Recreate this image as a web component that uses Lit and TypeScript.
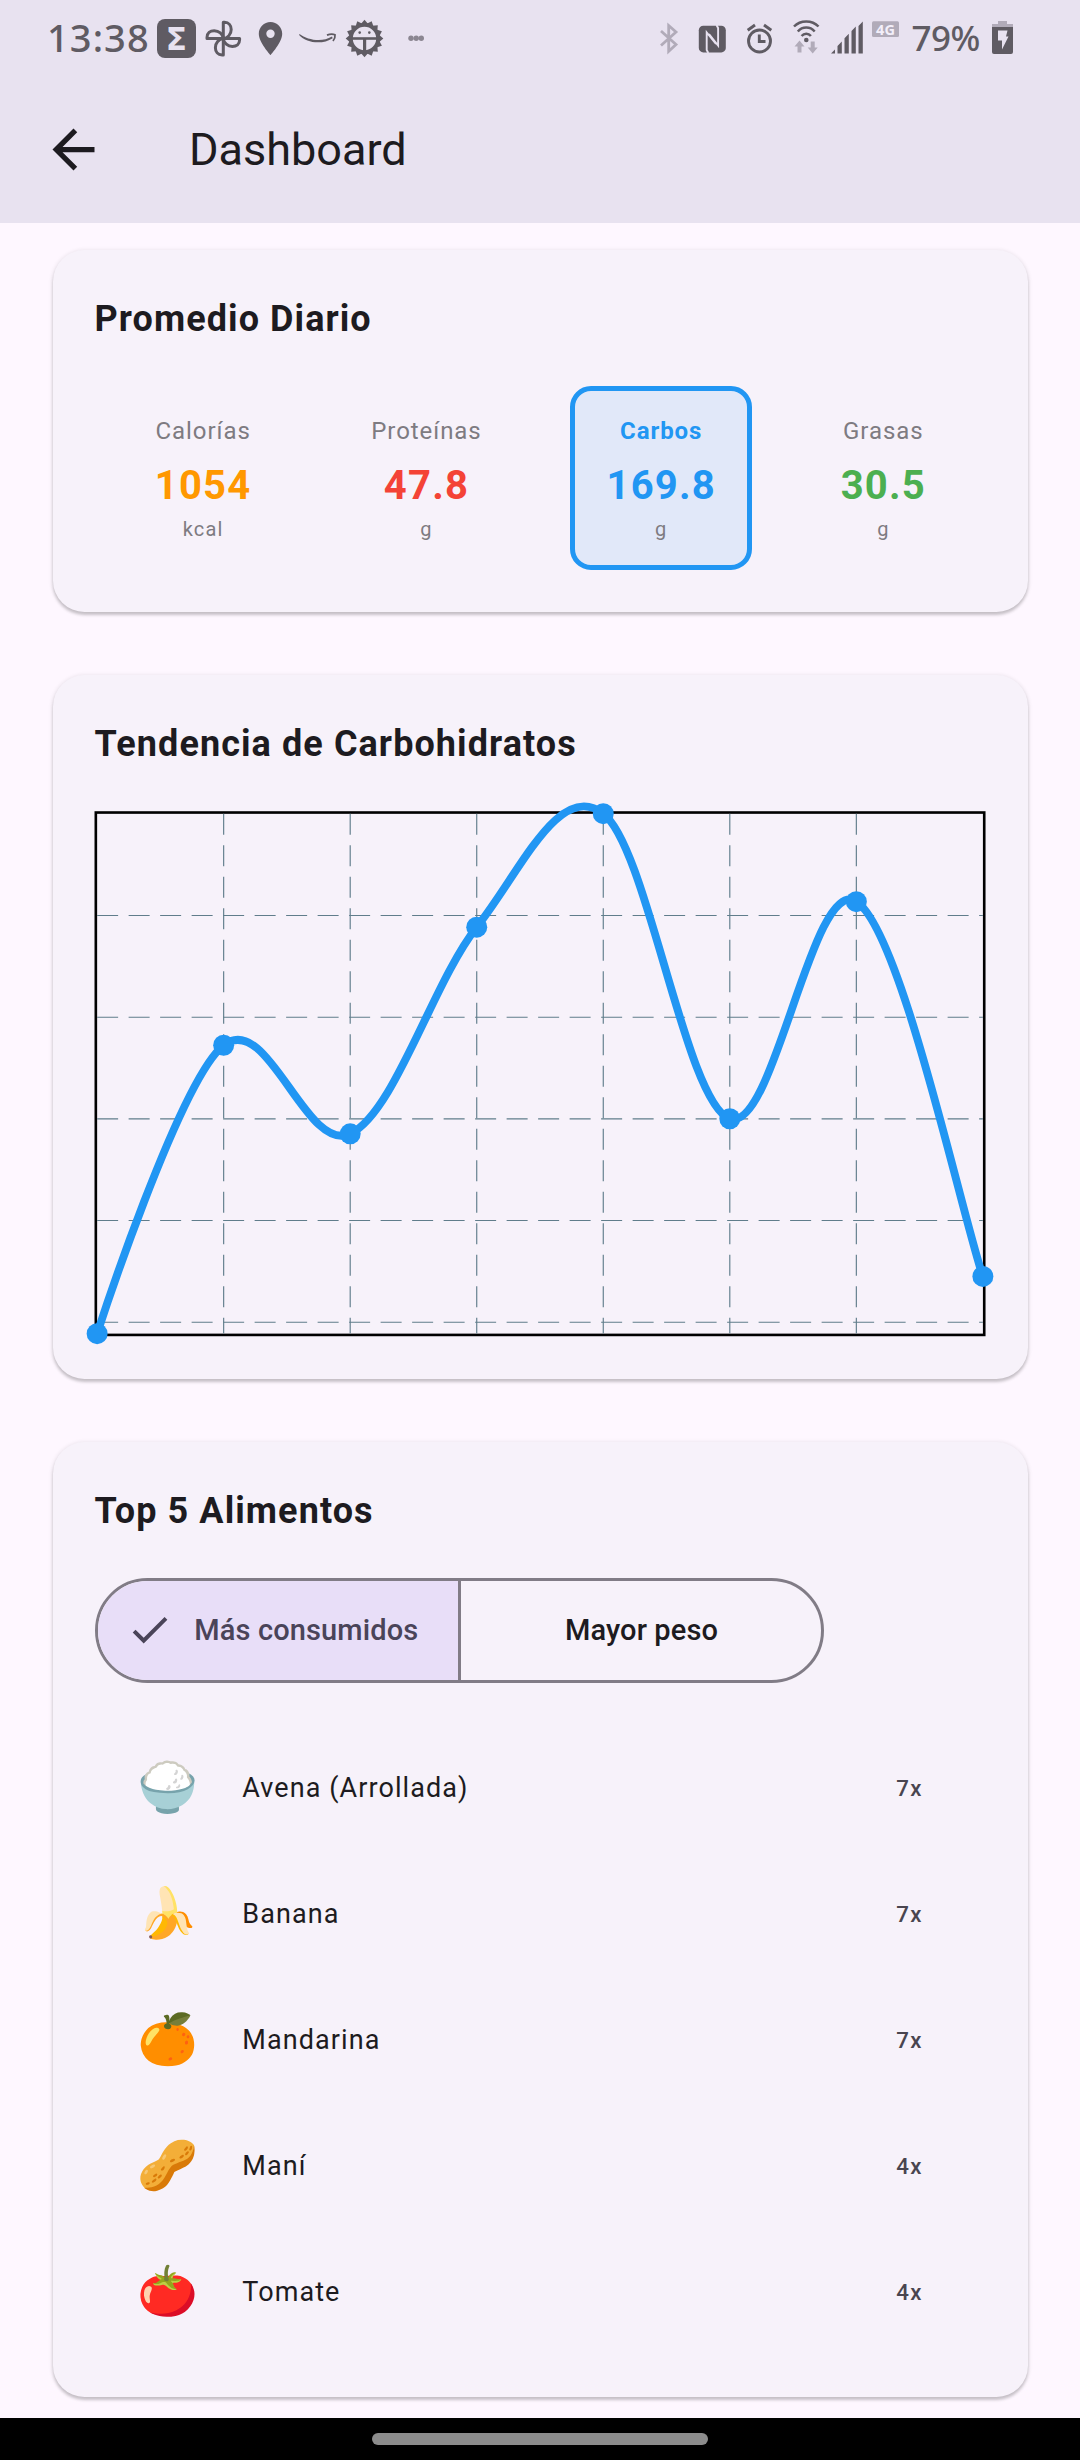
import { LitElement, html, css, svg } from "lit";
import { customElement, property } from "lit/decorators.js";
import { classMap } from "lit/directives/class-map.js";

interface Macro {
  label: string;
  value: string;
  unit: string;
  tone: string;
  selected?: boolean;
}

const MACROS: Macro[] = [
  { label: "Calorías", value: "1054", unit: "kcal", tone: "orange" },
  { label: "Proteínas", value: "47.8", unit: "g", tone: "red" },
  { label: "Carbos", value: "169.8", unit: "g", tone: "blue", selected: true },
  { label: "Grasas", value: "30.5", unit: "g", tone: "green" },
];

const FOODS = [
  { emoji: "🍚", name: "Avena (Arrollada)", count: "7x" },
  { emoji: "🍌", name: "Banana", count: "7x" },
  { emoji: "🍊", name: "Mandarina", count: "7x" },
  { emoji: "🥜", name: "Maní", count: "4x" },
  { emoji: "🍅", name: "Tomate", count: "4x" },
];

@customElement("status-bar")
export class StatusBar extends LitElement {
  static styles = css`
    :host {
      display: flex;
      height: 76px;
      color: #5f5b63;
      font-family: "Noto Sans", sans-serif;
      font-weight: 500;
      line-height: 75px;
    }
    svg {
      display: block;
      flex: none;
      height: 76px;
    }
    .time {
      flex: none;
      box-sizing: border-box;
      width: 151px;
      padding-left: 47px;
      font-size: 38px;
      letter-spacing: 1.1px;
    }
    .battery {
      flex: none;
      width: 79px;
      box-sizing: border-box;
      padding-left: 8.5px;
      font-size: 35px;
      letter-spacing: -0.5px;
    }
    .grow {
      flex: 1;
    }
    .sigma {
      font: bold 31px "DejaVu Sans", sans-serif;
    }
    .net {
      font: bold 14.5px "Open Sans", sans-serif;
    }
  `;

  // Each icon is cut from one 76px tall strip: x is its left edge, w its width.
  private icon(x: number, w: number, body: unknown) {
    return html`<svg width=${w} height="76" viewBox="${x} 0 ${w} 76" fill="currentColor">${body}</svg>`;
  }

  render() {
    const petal = "M223.3 38.6V22.3h1.2c4.300 0 6.700 3.200 6.700 7.200 0 4.700-3.400 8.600-7.900 9.100z";
    const teeth = Array.from({ length: 16 }, (_, i) => i * 22.5);
    return html`
      <div class="time">13:38</div>
      ${this.icon(151, 49, svg`
        <rect x="157" y="19" width="39" height="39" rx="8"/>
        <text class="sigma" x="176.300" y="49.500" text-anchor="middle" fill="#e8e2f0">Σ</text>`)}
      ${this.icon(200, 50, svg`
        <g fill="none" stroke="currentColor" stroke-width="3" stroke-linejoin="round">
          ${[0, 90, 180, 270].map((a) => svg`<path d=${petal} transform="rotate(${a} 223.3 38.6)"/>`)}
        </g>`)}
      ${this.icon(250, 40, svg`
        <path fill-rule="evenodd" d="M270.500 22c-6.500 0-11.700 5.200-11.700 11.700C258.800 42.300 270.500 55 270.500 55s11.700-12.700 11.700-21.300c0-6.500-5.200-11.700-11.700-11.700zm0 16a4.200 4.200 0 1 1 0-8.400 4.200 4.200 0 0 1 0 8.400z"/>`)}
      ${this.icon(290, 50, svg`
        <path d="M299.500 34c8 5.800 22 9 32.500 2.600l.7 1.600c-10 6.600-26 5.200-33.600-3.200z"/>
        <path d="M327 35.200c3-1.300 6-1.300 8-.4.3 2.200-.5 4.400-2 6.200" fill="none" stroke="currentColor" stroke-width="1.800"/>`)}
      ${this.icon(340, 50, svg`
        ${teeth.map((a) => svg`<path d="M360.800 24l3.700-4.300 3.700 4.300z" transform="rotate(${a} 364.5 38.500)"/>`)}
        <circle cx="364.500" cy="38.500" r="13.500" fill="none" stroke="currentColor" stroke-width="3.600"/>
        <rect x="351" y="37.200" width="27" height="2.600"/>
        <rect x="363" y="38.500" width="3.200" height="14"/>
        <circle cx="359.700" cy="32.600" r="1.300"/>
        <circle cx="369.300" cy="32.600" r="1.300"/>`)}
      ${this.icon(390, 40, svg`
        <g fill="#8b8691">
          <circle cx="411" cy="38.200" r="2.700"/><circle cx="416.200" cy="38.200" r="2.700"/><circle cx="421.300" cy="38.200" r="2.700"/>
        </g>`)}
      <div class="grow"></div>
      ${this.icon(650, 38, svg`
        <path d="M661 31l15 13.500-7.300 6.700V25.500l7.300 6.500-15 13.500" fill="none" stroke="#b1abb9" stroke-width="2.800"/>`)}
      ${this.icon(688, 48, svg`
        <rect x="698.800" y="25.700" width="27" height="26.700" rx="4.500"/>
        <path d="M708.300 53l-1.600-3V32.500l9.300 11.500M716.500 25l1.600 3v17.500L709 34" fill="none" stroke="#e8e2f0" stroke-width="1.900"/>`)}
      ${this.icon(736, 48, svg`
        <g fill="none" stroke="currentColor" stroke-width="2.900">
          <circle cx="759.500" cy="41" r="11"/>
          <path d="M747.700 30.200l7.300-5.200M764 25l7.300 5.200"/>
          <path d="M759.300 34.500v7h6.200"/>
        </g>`)}
      ${this.icon(784, 40, svg`
        <g fill="none" stroke="currentColor" stroke-width="2.500">
          <path d="M794 26.500c6.500-6.800 18-6.800 24.500 0"/>
          <path d="M797.800 31.500c4.600-5.200 12.300-5.200 16.900 0"/>
          <path d="M801.600 36c2.500-3 6.800-3 9.300 0"/>
        </g>
        <circle cx="806.300" cy="40" r="2.300"/>
        <path fill="#b1abb9" d="M799.500 40.500l5 6h-3v6h-4v-6h-3zM812.700 53.500l-5-6h3v-6h4v6h3z"/>`)}
      ${this.icon(824, 43, svg`
        <path d="M831 53.500l4-4v4zM837.500 53.500v-7.500l4.300-4.500v12zM844.500 53.500v-15.300l4.300-4.500v19.800zM851.500 53.500v-22.500l4.300-4.500v27zM858.500 53.500V26l4.300-4.500v32z"/>`)}
      ${this.icon(867, 36, svg`
        <rect x="872" y="21.300" width="27" height="15.700" rx="1.500" fill="#b1abb9"/>
        <text class="net" x="885.500" y="34.500" text-anchor="middle" fill="#f3effa">4G</text>`)}
      <div class="battery">79%</div>
      ${this.icon(982, 98, svg`
        <path fill="#b1abb9" d="M998 21h9v3h6v3h-21v-3h6z"/>
        <path d="M992 27h21v25a2 2 0 0 1-2 2h-17a2 2 0 0 1-2-2z"/>
        <path fill="#e8e2f0" d="M998 30.500h9.500l-1.500 6h2.500l-6.500 13v-9h-4z"/>`)}
    `;
  }
}

@customElement("trend-chart")
export class TrendChart extends LitElement {
  static styles = css`
    :host {
      display: block;
      height: 525px;
    }
    svg {
      display: block;
      overflow: visible;
    }
  `;

  @property({ attribute: false }) points: number[] = [
    519.8, 231.4, 320, 113.3, -0.2, 304.9, 87.8, 462.6,
  ];

  private readonly width = 885.75;
  private readonly height = 519.75;

  private curve(pts: [number, number][]) {
    const smoothness = 0.35;
    let tx = 0;
    let ty = 0;
    let d = `M${pts[0][0]} ${pts[0][1]}`;
    for (let i = 1; i < pts.length; i++) {
      const prev = pts[i - 1];
      const cur = pts[i];
      const next = pts[Math.min(i + 1, pts.length - 1)];
      const c1 = [prev[0] + tx, prev[1] + ty];
      tx = ((next[0] - prev[0]) / 2) * smoothness;
      ty = ((next[1] - prev[1]) / 2) * smoothness;
      d += `C${c1[0]} ${c1[1]} ${cur[0] - tx} ${cur[1] - ty} ${cur[0]} ${cur[1]}`;
    }
    return d;
  }

  render() {
    const step = this.width / (this.points.length - 1);
    const pts = this.points.map((y, i) => [i * step, y] as [number, number]);
    const rows = [101.7, 203.4, 305.1, 406.7, 508.4];
    return html`
      <svg width="891" height="525" viewBox="-2.125 -2.825 891 525">
        <rect x="-1.3" y="-1.3" width="888.4" height="522.4" fill="none" stroke="#000" stroke-width="2.625"/>
        <g stroke="#607d8b" stroke-width="1.150" stroke-dasharray="21 10.5">
          ${pts.slice(1, -1).map(([x]) => svg`<line x1=${x} x2=${x} y1="0" y2=${this.height}/>`)}
          ${rows.map((y) => svg`<line x1="0" x2=${this.width} y1=${y} y2=${y}/>`)}
        </g>
        <path d=${this.curve(pts)} fill="none" stroke="#2196f3" stroke-width="7.875"/>
        ${pts.map(([x, y]) => svg`<circle cx=${x} cy=${y} r="10.5" fill="#2196f3"/>`)}
      </svg>
    `;
  }
}

@customElement("app-root")
export class AppRoot extends LitElement {
  static styles = css`
    :host {
      display: flex;
      flex-direction: column;
      width: 1080px;
      height: 2460px;
      overflow: hidden;
      background: #fef7ff;
      color: #1d1b20;
      font-family: Roboto, sans-serif;
    }
    .top {
      flex: none;
      height: 223px;
      background: #e8e2f0;
    }
    .toolbar {
      display: flex;
      align-items: center;
      gap: 84px;
      height: 147px;
      padding-left: 42px;
      font-size: 45px;
    }
    .toolbar svg {
      width: 63px;
      height: 63px;
      fill: currentColor;
    }
    .content {
      flex: 1;
      display: flex;
      flex-direction: column;
      gap: 63px;
      padding: 27px 52.5px 0;
    }
    .card {
      padding: 42px;
      border-radius: 31.5px;
      background: #f7f2fa;
      box-shadow:
        0 3px 3px rgba(0, 0, 0, 0.17),
        0 1px 4px 1px rgba(0, 0, 0, 0.09);
    }
    .title {
      margin: 0 0 39.4px;
      font-size: 36px;
      font-weight: 700;
      line-height: 54.6px;
      letter-spacing: 1.08px;
    }
    .trend {
      padding-bottom: 42.6px;
    }
    .macros {
      display: flex;
      justify-content: space-around;
      align-items: center;
    }
    .macro {
      display: flex;
      flex-direction: column;
      align-items: center;
      padding: 22px 31.1px 21.4px 31.9px;
    }
    .selected {
      border: 5.25px solid #2196f3;
      border-radius: 21px;
      background: #e1e8f9;
    }
    .label {
      margin-bottom: 8px;
      color: #7e7b81;
      font-size: 24px;
      line-height: 36px;
      letter-spacing: 0.95px;
    }
    .selected .label {
      color: #2196f3;
      font-weight: 700;
    }
    .value {
      margin-bottom: 1px;
      font-size: 40px;
      font-weight: 700;
      line-height: 57px;
      letter-spacing: 1.2px;
    }
    .unit {
      color: #7e7b81;
      font-size: 20px;
      line-height: 28.6px;
      letter-spacing: 1.1px;
    }
    .orange {
      color: #ff9800;
    }
    .red {
      color: #f44336;
    }
    .blue {
      color: #2196f3;
    }
    .green {
      color: #4caf50;
    }
    .segments {
      display: grid;
      grid-template-columns: 363.5px 1fr;
      box-sizing: border-box;
      width: 729px;
      height: 105px;
      margin-bottom: 42px;
      overflow: hidden;
      border: 3px solid #817c86;
      border-radius: 53px;
      font-size: 29px;
      font-weight: 500;
      letter-spacing: 0.12px;
    }
    .segment {
      display: flex;
      align-items: center;
      justify-content: center;
      padding-left: 1.5px;
    }
    .segment.on {
      justify-content: flex-start;
      gap: 21px;
      padding-left: 28.6px;
      border-right: 3px solid #817c86;
      background: #e8def8;
      color: #4a4459;
    }
    .segment svg {
      width: 47.25px;
      height: 47.25px;
      fill: currentColor;
    }
    .food {
      display: grid;
      grid-template-columns: 105.8px 1fr auto;
      align-items: center;
      height: 126px;
      padding: 0 62.8px 0 42px;
    }
    .emoji {
      font-size: 49px;
      line-height: 60px;
    }
    .name {
      font-size: 27px;
      letter-spacing: 1.08px;
    }
    .count {
      color: #49454f;
      font-size: 22.3px;
      font-weight: 500;
      letter-spacing: 1.3px;
    }
    .nav {
      flex: none;
      display: flex;
      align-items: center;
      justify-content: center;
      height: 42px;
      background: #000;
    }
    .pill {
      width: 336px;
      height: 12px;
      border-radius: 6px;
      background: #8c8c8c;
    }
  `;

  render() {
    return html`
      <header class="top">
        <status-bar></status-bar>
        <div class="toolbar">
          <svg viewBox="0 0 24 24"><path d="M20 11H7.83l5.59-5.59L12 4l-8 8 8 8 1.41-1.41L7.83 13H20z"/></svg>
          <span>Dashboard</span>
        </div>
      </header>
      <main class="content">
        <section class="card">
          <h2 class="title">Promedio Diario</h2>
          <div class="macros">
            ${MACROS.map(
              (m) => html`
                <div class=${classMap({ macro: true, selected: !!m.selected })}>
                  <div class="label">${m.label}</div>
                  <div class="value ${m.tone}">${m.value}</div>
                  <div class="unit">${m.unit}</div>
                </div>
              `,
            )}
          </div>
        </section>
        <section class="card trend">
          <h2 class="title">Tendencia de Carbohidratos</h2>
          <trend-chart></trend-chart>
        </section>
        <section class="card">
          <h2 class="title">Top 5 Alimentos</h2>
          <div class="segments">
            <div class="segment on">
              <svg viewBox="0 0 24 24"><path d="M9 16.17L4.83 12l-1.42 1.41L9 19 21 7l-1.41-1.41z"/></svg>
              <span>Más consumidos</span>
            </div>
            <div class="segment">Mayor peso</div>
          </div>
          ${FOODS.map(
            (f) => html`
              <div class="food">
                <span class="emoji">${f.emoji}</span>
                <span class="name">${f.name}</span>
                <span class="count">${f.count}</span>
              </div>
            `,
          )}
        </section>
      </main>
      <footer class="nav"><div class="pill"></div></footer>
    `;
  }
}
